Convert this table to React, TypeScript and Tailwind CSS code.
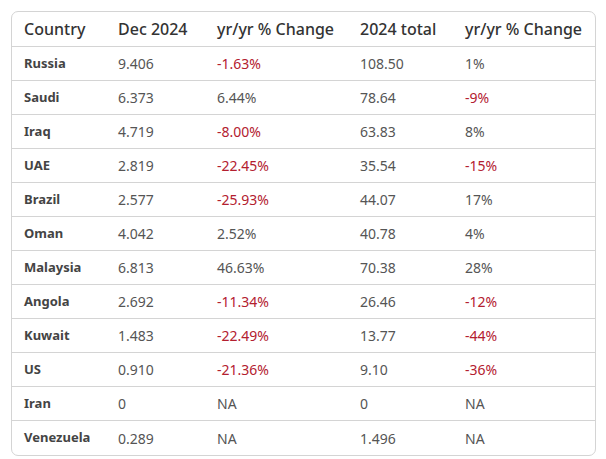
import React from "react";

// one row of the table
interface Row {
  country: string;
  dec: string;
  decChange: string;
  total: string;
  totalChange: string;
}

const rows: Row[] = [
  { country: "Russia", dec: "9.406", decChange: "-1.63%", total: "108.50", totalChange: "1%" },
  { country: "Saudi", dec: "6.373", decChange: "6.44%", total: "78.64", totalChange: "-9%" },
  { country: "Iraq", dec: "4.719", decChange: "-8.00%", total: "63.83", totalChange: "8%" },
  { country: "UAE", dec: "2.819", decChange: "-22.45%", total: "35.54", totalChange: "-15%" },
  { country: "Brazil", dec: "2.577", decChange: "-25.93%", total: "44.07", totalChange: "17%" },
  { country: "Oman", dec: "4.042", decChange: "2.52%", total: "40.78", totalChange: "4%" },
  { country: "Malaysia", dec: "6.813", decChange: "46.63%", total: "70.38", totalChange: "28%" },
  { country: "Angola", dec: "2.692", decChange: "-11.34%", total: "26.46", totalChange: "-12%" },
  { country: "Kuwait", dec: "1.483", decChange: "-22.49%", total: "13.77", totalChange: "-44%" },
  { country: "US", dec: "0.910", decChange: "-21.36%", total: "9.10", totalChange: "-36%" },
  { country: "Iran", dec: "0", decChange: "NA", total: "0", totalChange: "NA" },
  { country: "Venezuela", dec: "0.289", decChange: "NA", total: "1.496", totalChange: "NA" },
];

const Change = ({ value }: { value: string }) => (
  <div className={`pl-[12px] ${value.startsWith("-") ? "text-[#b3202f]" : "text-[#555555]"}`}>
    {value}
  </div>
);

export default function App() {
  return (
    <div className="w-[606px] h-[459px] bg-white pt-[11px] pl-[11px] font-['Noto_Sans','Open_Sans',sans-serif]">
      <div className="w-[585px] border border-[#d4d4d4] rounded-[7px] overflow-hidden">
        <div className="grid grid-cols-[94px_99px_143px_105px_143px] h-[35px] items-center text-[16px] font-medium text-[#333333] border-b border-[#d4d4d4]">
          <div className="pl-[12px]">Country</div>
          <div className="pl-[12px]">Dec 2024</div>
          <div className="pl-[12px]">yr/yr % Change</div>
          <div className="pl-[12px]">2024 total</div>
          <div className="pl-[12px]">yr/yr % Change</div>
        </div>
        {rows.map((r, i) => (
          <div
            key={r.country}
            className={`grid grid-cols-[94px_99px_143px_105px_143px] h-[34px] items-center text-[14px] ${
              i < rows.length - 1 ? "border-b border-[#d4d4d4]" : ""
            }`}
          >
            <div className="pl-[12px] text-[13px] font-bold text-[#444444]">{r.country}</div>
            <div className="pl-[12px] text-[#555555]">{r.dec}</div>
            <Change value={r.decChange} />
            <div className="pl-[12px] text-[#555555]">{r.total}</div>
            <Change value={r.totalChange} />
          </div>
        ))}
      </div>
    </div>
  );
}
